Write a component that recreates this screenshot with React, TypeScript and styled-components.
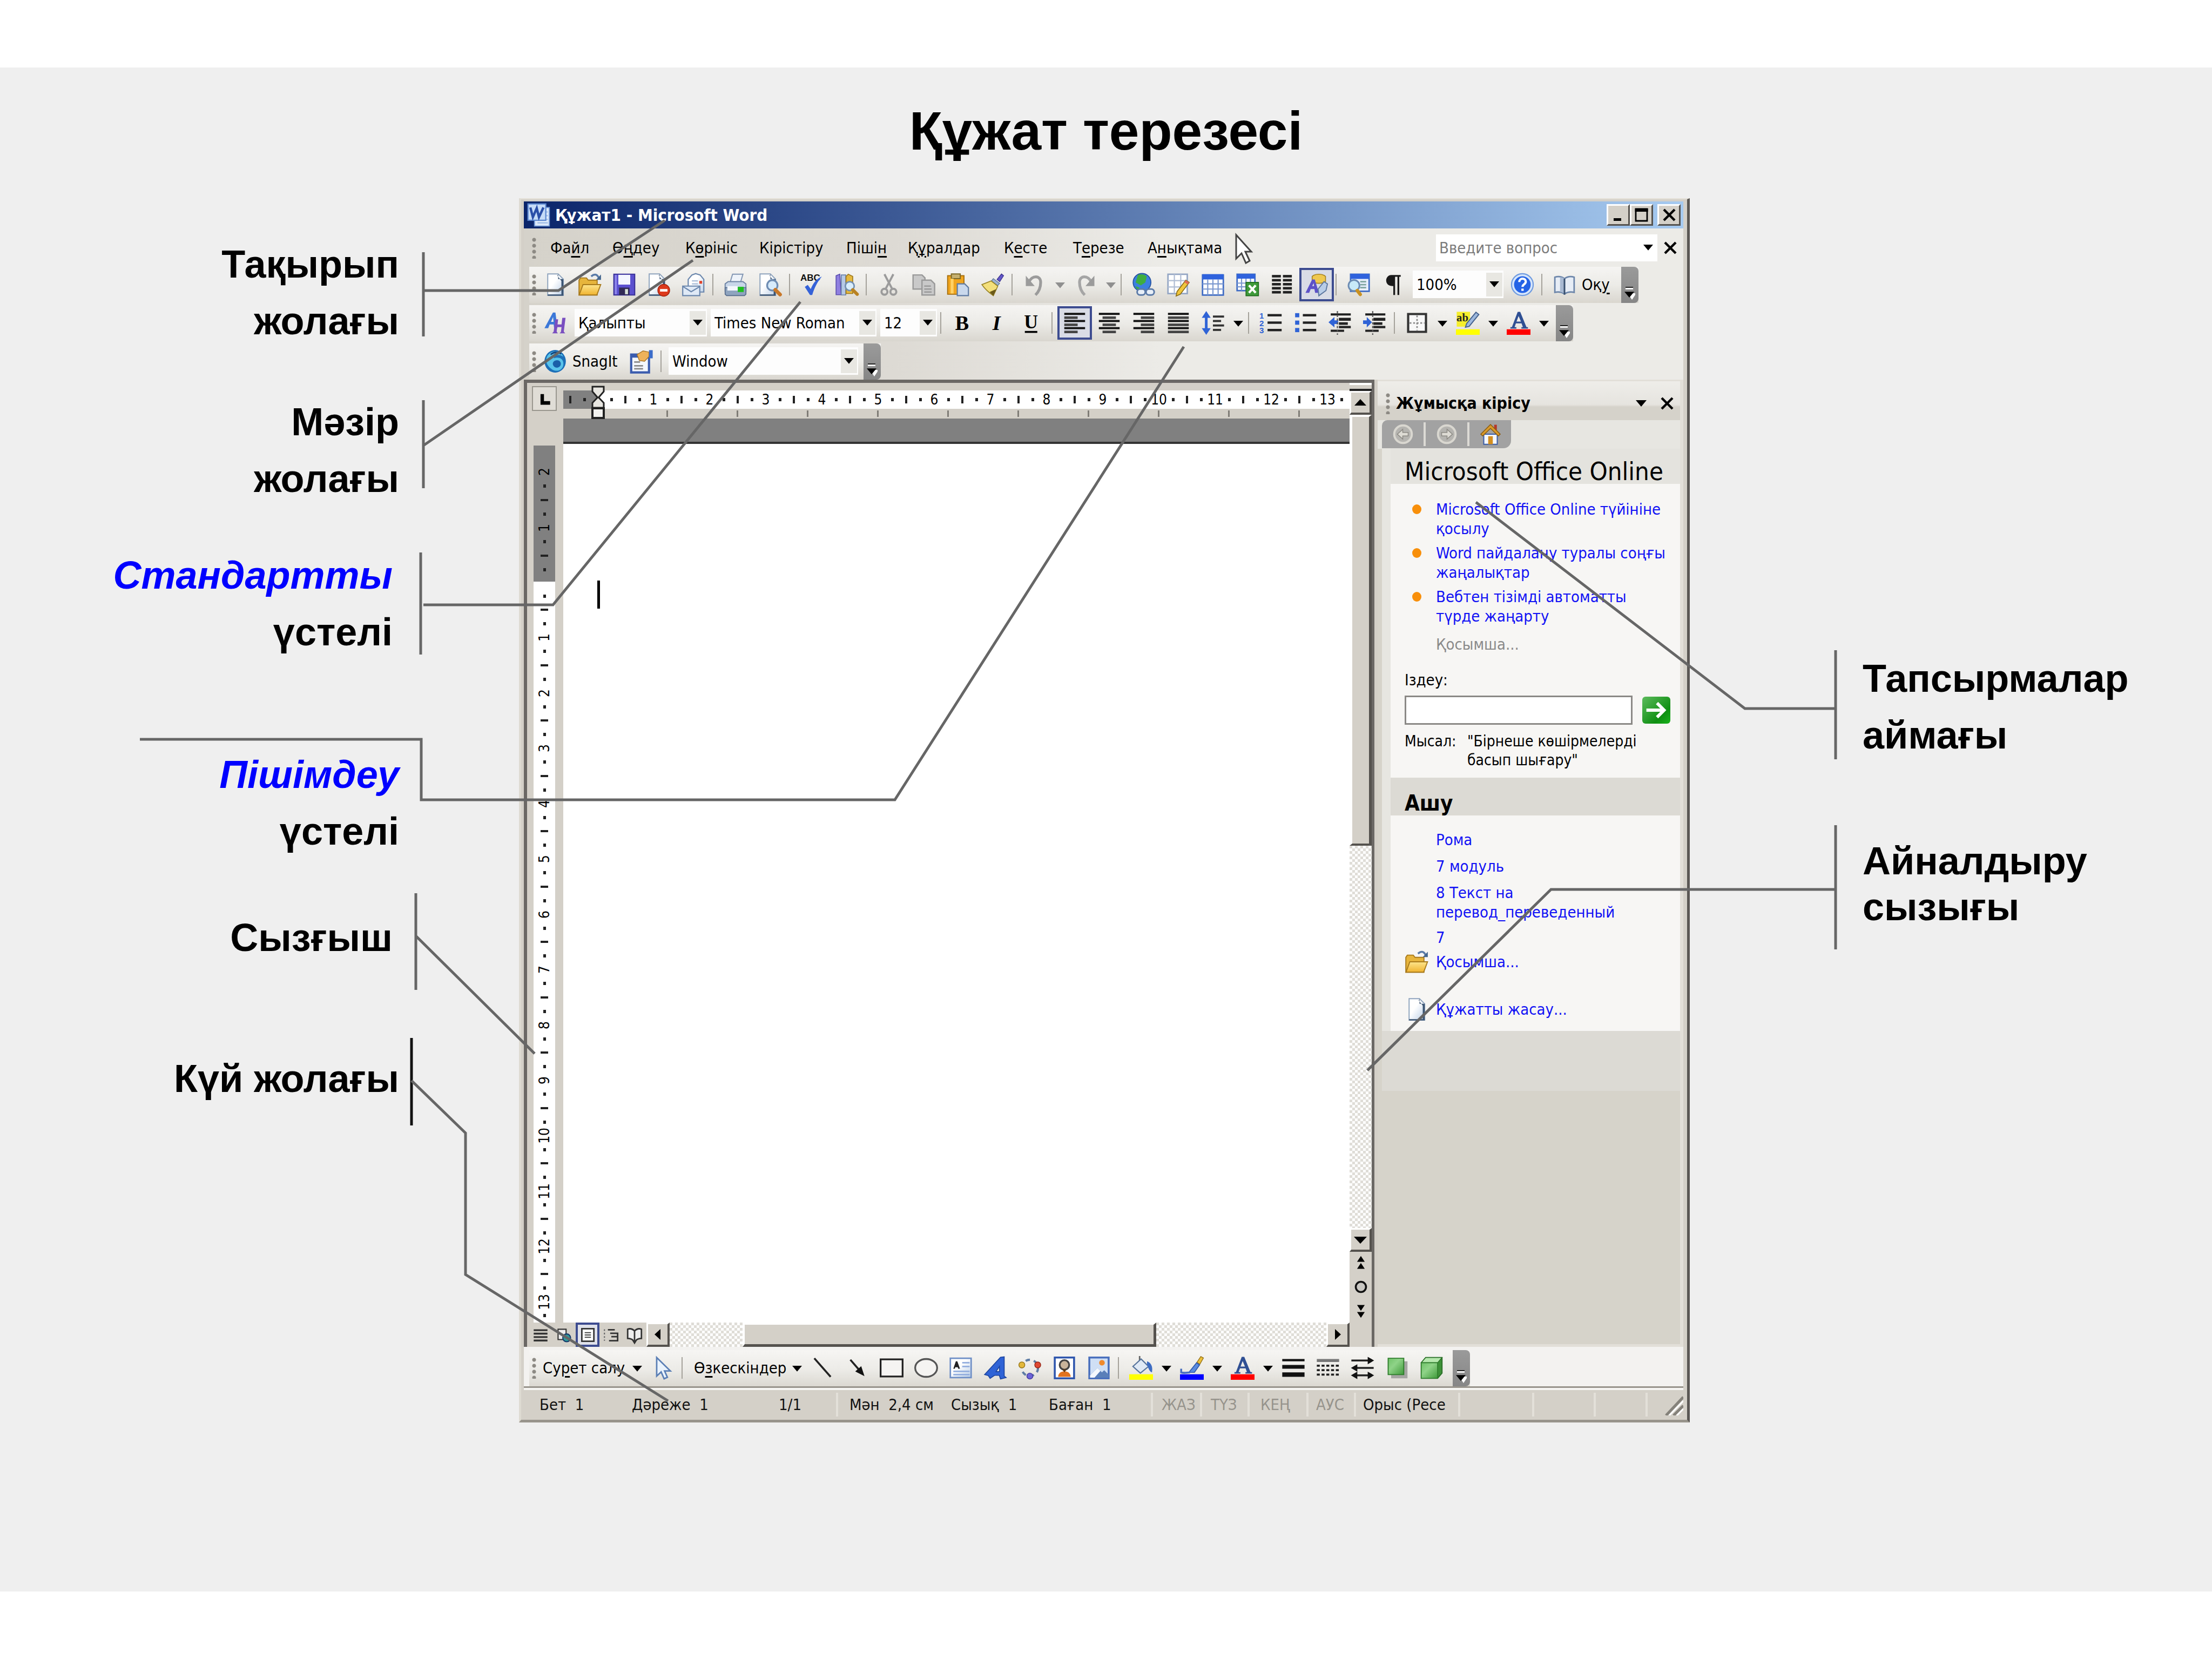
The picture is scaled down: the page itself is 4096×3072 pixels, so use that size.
import React from 'react';
import styled, { createGlobalStyle, css } from 'styled-components';

const uiFont = '"DejaVu Sans Condensed", "DejaVu Sans", "Noto Sans", sans-serif';
const face = '#d4d0c8';

const GlobalStyle = createGlobalStyle`
  *, *::before, *::after { box-sizing: border-box; }
  body { margin: 0; background: #fff; font-family: "Liberation Sans", Arial, sans-serif; color: #000; }
  button, input, select { font: inherit; color: inherit; }
  h1, h2, h3, ul, p { margin: 0; padding: 0; }
`;

/* ---------- slide ---------- */
const Page = styled.div`
  position: relative;
  min-height: 100vh;
  padding: 125px 0;
  display: flex;
  flex-direction: column;
`;
const Slide = styled.main`
  flex: 1;
  background: #efefef;
`;
const SlideHeader = styled.header`
  height: 242px;
  padding-bottom: 8px;
  display: grid;
  place-items: center;
`;
const SlideTitle = styled.h1`
  font-size: 100px;
  line-height: 120px;
  font-weight: bold;
`;
const Columns = styled.div`
  display: grid;
  grid-template-columns: minmax(0, 961fr) minmax(0, 2168fr) minmax(0, 967fr);
  align-items: start;
`;
const Notes = styled.div<{ $side: 'left' | 'right' }>`
  display: flex;
  flex-direction: column;
  text-align: ${p => (p.$side === 'left' ? 'right' : 'left')};
`;
const Note = styled.p<{ $before: number; $inset: number; $tight?: boolean }>`
  font-size: 72px;
  font-weight: bold;
  line-height: ${p => (p.$tight ? 85 : 105)}px;
  margin-top: ${p => p.$before}px;
  padding: ${p => (p.$inset > 300 ? `0 0 0 ${p.$inset}px` : `0 ${p.$inset}px 0 0`)};
  white-space: nowrap;
`;
const Term = styled.em`
  color: #00f;
`;
const Leaders = styled.svg`
  position: absolute;
  inset: 0;
  width: 100%;
  height: 100%;
  pointer-events: none;
`;

/* ---------- window ---------- */
const Window = styled.section`
  background: ${face};
  border: solid;
  border-width: 2px 5px 5px 4px;
  border-color: #e4e1d8 #5b5855 #98948c #dedbd2;
  padding: 4px 7px 3px 5px;
  font-family: ${uiFont};
  font-size: 29px;
  line-height: 36px;
  position: relative;
`;
const TitleBar = styled.div`
  height: 50px;
  display: flex;
  align-items: center;
  padding: 0 5px 0 6px;
  background: linear-gradient(90deg, #0a246a, #a6caf0);
  color: #fff;
`;
const TitleText = styled.h2`
  flex: 1;
  font-size: 31px;
  line-height: 40px;
  padding-left: 8px;
  font-weight: bold;
`;
const raised = css`
  background: ${face};
  border: 3px solid;
  border-color: #fff #55524e #55524e #fff;
`;
const CaptionButton = styled.button<{ $gap?: boolean }>`
  ${raised}
  width: 43px;
  height: 40px;
  padding: 0;
  margin-left: ${p => (p.$gap ? 8 : 0)}px;
  display: grid;
  place-items: center;
`;
const Chrome = styled.div`
  background: linear-gradient(90deg, #d5d2ca 0, #dddad4 32%, #ecebe7 55%);
`;
const MenuBar = styled.nav`
  height: 71px;
  display: flex;
  align-items: center;
  padding-left: 10px;
`;
const MenuItem = styled.button<{ $w: number }>`
  width: ${p => p.$w}px;
  padding: 0;
  border: 0;
  background: none;
  text-align: left;
  white-space: nowrap;
  u { text-underline-offset: 5px; text-decoration-thickness: 3px; }
`;
const Handle = styled.span<{ $w?: number }>`
  width: ${p => p.$w ?? 16}px;
  height: 40px;
  flex: none;
  background: radial-gradient(circle at 9px 5px, #8d8a84 3px, transparent 4px) 0 0 / 16px 11px repeat-y;
`;
const AskBox = styled.label`
  margin-left: auto;
  width: 410px;
  height: 50px;
  display: grid;
  align-items: center;
  background: #fff;
  > * { grid-area: 1 / 1; }
`;
const AskInput = styled.input`
  width: 100%;
  border: 0;
  padding: 0 6px;
  background: none;
  &::placeholder { color: #7c7c7c; opacity: 1; }
`;
const FlatButton = styled.button`
  width: 48px;
  height: 44px;
  border: 0;
  padding: 0;
  background: none;
  display: grid;
  place-items: center;
`;
const Toolbar = styled.div<{ $last?: boolean }>`
  width: max-content;
  height: 67px;
  margin: 0 0 ${p => (p.$last ? 0 : 4)}px 10px;
  padding-bottom: 2px;
  display: flex;
  align-items: center;
  background: linear-gradient(180deg, #f5f4f2 0, #ecebe7 50%, #d9d6cf 100%);
`;
const IconButton = styled.button<{ $on?: boolean }>`
  width: 64px;
  height: 62px;
  flex: none;
  padding: 0;
  display: grid;
  place-items: center;
  border: 4px solid ${p => (p.$on ? '#3d4c90' : 'transparent')};
  background: ${p => (p.$on ? '#d9dce6' : 'none')};
`;
const DropButton = styled.button`
  width: 30px;
  height: 62px;
  flex: none;
  padding: 4px 0 0;
  border: 0;
  background: none;
  display: grid;
  place-items: center;
`;
const WordButton = styled.button<{ $w: number; $indent?: boolean }>`
  width: ${p => p.$w}px;
  border: 0;
  padding: 0 0 0 ${p => (p.$indent ? 12 : 0)}px;
  background: none;
  display: flex;
  align-items: center;
  white-space: nowrap;
  u { text-underline-offset: 5px; text-decoration-thickness: 3px; }
`;
const Divider = styled.span`
  width: 14px;
  height: 40px;
  flex: none;
  border-right: 9px solid transparent;
  background: linear-gradient(90deg, transparent 3px, #a5a29b 3px) padding-box;
`;
const ComboBox = styled.label<{ $w: number }>`
  width: ${p => p.$w}px;
  height: 51px;
  margin: 0 3px 0 4px;
  display: grid;
  align-items: center;
  background: #fdfdfd;
  > * { grid-area: 1 / 1; }
`;
const ComboSelect = styled.select`
  appearance: none;
  width: 100%;
  height: 46px;
  border: 0;
  padding: 0 7px;
  background: none;
`;
const ComboArrow = styled.span<{ $plain?: boolean }>`
  justify-self: end;
  width: 30px;
  height: 44px;
  margin-right: 2px;
  display: grid;
  place-items: center;
  background: ${p => (p.$plain ? 'none' : '#e8e7e2')};
  pointer-events: none;
`;
const EndCap = styled.button`
  width: 32px;
  height: 67px;
  margin-left: 7px;
  padding: 0 0 6px;
  align-self: flex-start;
  border: 0;
  border-radius: 0 8px 8px 0;
  background: linear-gradient(180deg, #9a9a9a, #868686);
  display: flex;
  align-items: flex-end;
  justify-content: center;
`;

/* ---------- document ---------- */
const Workspace = styled.div`
  display: flex;
  gap: 6px;
  min-height: 1791px;
`;
const DocFrame = styled.div`
  flex: 1;
  min-width: 0;
  border: solid #6b6865;
  border-width: 6px 5px 0 6px;
  display: grid;
  grid-template-columns: 67px minmax(0, 1fr) 41px;
  grid-template-rows: 66px minmax(0, 1fr) 45px;
`;
const Corner = styled.div`
  padding: 6px 0 0 9px;
`;
const TabButton = styled.button`
  width: 46px;
  height: 46px;
  padding: 0;
  border: 2px solid #9a978f;
  background: #e0ddd6;
  display: grid;
  place-items: center;
`;
const HRuler = styled.div`
  padding-top: 14px;
  position: relative;
`;
const HStrip = styled.div`
  display: flex;
  height: 34px;
`;
const HPart = styled.div<{ $margin?: boolean }>`
  display: flex;
  align-items: center;
  overflow: hidden;
  background: ${p => (p.$margin ? '#808080' : '#fff')};
  ${p => (p.$margin ? 'width: 64px;' : 'flex: 1; padding-left: 12px;')}
`;
const HTick = styled.span`
  width: 26px;
  flex: none;
  display: flex;
  justify-content: center;
  font-size: 26px;
  line-height: 34px;
`;
const Dot = styled.i`
  width: 5px;
  height: 6px;
  background: #222;
`;
const Bar = styled.i<{ $v?: boolean }>`
  width: ${p => (p.$v ? 14 : 4)}px;
  height: ${p => (p.$v ? 4 : 14)}px;
  background: #222;
`;
const TabStops = styled.div`
  display: flex;
  overflow: hidden;
  height: 12px;
  margin-top: 3px;
  padding-left: 64px;
`;
const TabStop = styled.span`
  width: 130px;
  flex: none;
  border-right: 3px solid #807d77;
`;
const IndentMarker = styled.svg`
  position: absolute;
  left: 52px;
  top: 5px;
  width: 25px;
  height: 62px;
`;
const VRuler = styled.div`
  padding: 50px 15px 0 12px;
  display: flex;
  flex-direction: column;
`;
const VPart = styled.div<{ $margin?: boolean }>`
  display: flex;
  flex-direction: column;
  background: ${p => (p.$margin ? '#808080' : '#fff')};
  ${p => (p.$margin ? 'height: 252px; padding: 36px 0 9px;' : 'flex: 1; padding-top: 14px;')}
`;
const VTick = styled.span`
  flex: 1 1 0;
  min-height: 0;
  display: flex;
  align-items: center;
  justify-content: center;
`;
const VNumber = styled.span`
  writing-mode: vertical-rl;
  transform: rotate(180deg);
  font-size: 26px;
  line-height: 34px;
`;
const Paper = styled.div`
  background: #fff;
  border-top: 43px solid #808080;
`;
const PaperEdge = styled.div`
  height: 257px;
  border-top: 4px solid #333;
`;
const Caret = styled.div`
  width: 5px;
  height: 52px;
  margin-left: 63px;
  background: #000;
`;
const dither = css`
  background: repeating-conic-gradient(#fdfdfd 0 25%, #dfddd7 0 50%) 0 0 / 10px 10px;
`;
const VScroll = styled.div`
  grid-column: 3;
  grid-row: 1 / 4;
  display: flex;
  flex-direction: column;
`;
const SplitBox = styled.div`
  height: 15px;
  border: solid;
  border-width: 4px 0 4px;
  border-color: #fff #333 #222;
`;
const ScrollButton = styled.button<{ $w?: number }>`
  ${raised}
  border-width: 3px 4px 4px 3px;
  width: ${p => (p.$w ? p.$w + 'px' : 'auto')};
  height: ${p => (p.$w ? 'auto' : '44px')};
  flex: none;
  padding: 0;
  display: grid;
  place-items: center;
`;
const VThumb = styled.div`
  ${raised}
  border-width: 4px 5px 4px 5px;
  height: 798px;
`;
const Track = styled.div<{ $w?: number }>`
  ${dither}
  ${p => (p.$w ? `width: ${p.$w}px;` : 'flex: 1;')}
`;
const BrowseButtons = styled.div`
  height: 176px;
  display: flex;
  flex-direction: column;
`;
const BrowseButton = styled.button`
  height: 43px;
  border: 0;
  padding: 0;
  background: none;
  display: grid;
  place-items: center;
`;
const HBar = styled.div`
  grid-column: 1 / 3;
  display: flex;
`;
const Views = styled.div`
  width: 221px;
  padding-left: 3px;
  display: flex;
`;
const ViewButton = styled.button<{ $on?: boolean }>`
  flex: 1;
  padding: 0;
  display: grid;
  place-items: center;
  border: 4px solid ${p => (p.$on ? '#3d4c90' : 'transparent')};
  background: ${p => (p.$on ? '#dfe1ea' : 'none')};
`;
const HThumb = styled.div`
  ${raised}
  border-width: 4px 5px 5px 4px;
  width: 766px;
`;

/* ---------- task pane ---------- */
const TaskPane = styled.aside`
  width: 566px;
  flex: none;
  padding: 3px 6px 5px 0;
  background: #e2dfd8;
  display: flex;
  flex-direction: column;
`;
const PaneHeader = styled.div`
  height: 72px;
  display: flex;
  align-items: center;
  padding: 10px 0 0 10px;
  background: linear-gradient(180deg, #eeede9 0, #e6e4df 60%, #d5d2ca 66%);
`;
const PaneTitle = styled.h2`
  flex: 1;
  padding-left: 8px;
  font-size: 30px;
  line-height: 36px;
`;
const PaneNav = styled.div`
  height: 53px;
  padding-left: 8px;
  background: #e7e6e1;
`;
const NavStrip = styled.div`
  width: 239px;
  height: 52px;
  display: flex;
  align-items: center;
  background: #a2a2a2;
  border-radius: 10px 0 14px 0;
`;
const NavButton = styled.button`
  flex: 1;
  height: 44px;
  padding: 0;
  border: 0;
  background: none;
  display: grid;
  place-items: center;
  & + & { border-left: 4px solid #dcdad5; }
`;
const PaneBody = styled.div`
  flex: 1;
  padding-left: 8px;
  background: #d6d3ca;
  display: flex;
  flex-direction: column;
`;
const SectionTitle = styled.h3<{ $tint?: boolean }>`
  height: ${p => (p.$tint ? 70 : 65)}px;
  display: flex;
  align-items: center;
  padding: ${p => (p.$tint ? 24 : 18)}px 0 0 26px;
  border-left: 16px solid #e7e6e1;
  background: ${p => (p.$tint ? '#dcdad4' : '#e4e3de')};
  font-size: ${p => (p.$tint ? 40 : 47)}px;
  line-height: 46px;
  font-weight: ${p => (p.$tint ? 'bold' : 'normal')};
  white-space: nowrap;
`;
const Section = styled.div`
  border-left: 16px solid #e7e6e1;
  background: #f7f6f4;
`;
const OnlineSection = styled(Section)`
  height: 544px;
  padding: 29px 0 0 26px;
`;
const OpenSection = styled(Section)`
  height: 399px;
  padding: 27px 0 0 26px;
`;
const LinkList = styled.ul`
  list-style: none;
`;
const LinkRow = styled.li<{ $after: number; $icon?: boolean }>`
  display: grid;
  grid-template-columns: 58px minmax(0, 1fr);
  align-items: ${p => (p.$icon ? 'center' : 'start')};
  margin-bottom: ${p => p.$after}px;
  line-height: 36px;
`;
const Bullet = styled.i`
  width: 17px;
  height: 18px;
  margin: 9px 0 0 14px;
  border-radius: 50%;
  background: #f88f0a;
`;
const PaneLink = styled.a<{ $muted?: boolean }>`
  grid-column: 2;
  color: ${p => (p.$muted ? '#8a8a8a' : '#1212f5')};
  text-decoration: none;
  white-space: nowrap;
`;
const SearchLabel = styled.label`
  display: block;
  margin-top: 30px;
  line-height: 36px;
`;
const SearchRow = styled.div`
  display: flex;
  align-items: center;
  gap: 18px;
  margin: 11px 0 13px;
`;
const SearchInput = styled.input`
  width: 422px;
  height: 54px;
  border: 3px solid #8b8986;
  background: #fff;
`;
const GoButton = styled.button`
  width: 52px;
  height: 50px;
  padding: 0;
  border: 0;
  border-radius: 6px;
  background: linear-gradient(135deg, #5dbb5d, #0f8f12 70%, #19b41c);
  display: grid;
  place-items: center;
`;
const Example = styled.p`
  display: grid;
  grid-template-columns: 116px minmax(0, 1fr);
  font-size: 28px;
  line-height: 35px;
  white-space: nowrap;
`;
const PaneFiller = styled.div`
  height: 111px;
  background: #dcdad4;
`;

/* ---------- bottom ---------- */
const DrawDock = styled.div`
  padding-top: 6px;
  background: #f3f2f0;
  ${Toolbar} { background: linear-gradient(180deg, #f6f5f3 0, #ecebe7 55%, #dbd8d1 100%); }
`;
const StatusBar = styled.footer`
  height: 59px;
  display: flex;
  align-items: center;
  border-top: 3px solid #98948c;
  box-shadow: inset 0 4px 0 #f6f5f2;
  padding: 6px 0 0 29px;
`;
const StatusItem = styled.span<{ $w: number; $muted?: boolean }>`
  width: ${p => p.$w}px;
  flex: none;
  white-space: pre;
  color: ${p => (p.$muted ? '#96938c' : '#111')};
`;
const StatusRule = styled.span<{ $after: number }>`
  width: ${p => p.$after}px;
  height: 44px;
  flex: none;
  border-left: 4px solid #e3e0d9;
`;
const Grip = styled.svg`
  margin-left: auto;
  width: 34px;
  height: 40px;
`;
const Pointer = styled.svg`
  position: absolute;
  left: 1320px;
  top: 62px;
  width: 36px;
  height: 60px;
`;

/* ---------- icons ---------- */
const IconSvg = styled.svg`
  overflow: visible;
`;
const Down = ({ c = '#000', w = 18 }: { c?: string; w?: number }) => (
  <svg width={w} height={w * 0.6} viewBox="0 0 10 6" aria-hidden="true"><path d="M0 0h10L5 6z" fill={c} /></svg>
);
const Cross = () => (
  <svg width="26" height="24" viewBox="0 0 13 12" aria-hidden="true"><path d="M1.5 1l10 10M11.5 1l-10 10" stroke="#000" strokeWidth="2.2" /></svg>
);
const CapMark = () => (
  <svg width="20" height="24" viewBox="0 0 10 12" aria-hidden="true"><path d="M3 6h8L7 12z" fill="#fff" /><path d="M1 1h7v1.4H1z" fill="#fff" /><path d="M1 0h7v1H1z" fill="#222" /><path d="M0 4.600h9L4.500 10z" fill="#000" /></svg>
);
const Lines = ({ rows }: { rows: [number, number][] }) => (
  <>{rows.map(([x, w], i) => <rect key={i} x={x} y={1.2 + i * 2.4} width={w} height={i % 2 ? 1.7 : 1.4} fill={i % 2 ? '#444' : '#111'} />)}</>
);
const page = <><path d="M3 .8h7l3.500 3.500v11H3z" fill="url(#gPage)" stroke="#8ea3bd" strokeWidth=".7" /><path d="M10 .8v3.500h3.500v11h-1.300V5.500L9.500 2z" fill="#3d5674" /><path d="M3 14.600h10.500v.9H3z" fill="#3d5674" /></>;
const letterA = <path d="M7.400 .5h1.700l4.200 10.300h1v1H9.900v-1h1L10 8.300H6.200l-.9 2.500h1.200v1H2.500v-1h1zM8 3.400L6.600 7.100h3z" fill="#2f4f93" />;

const icons: Record<string, React.ReactNode> = {
  newDoc: page,
  open: <><path d="M.8 5l1-1.500h4L7 5h6v10H.8z" fill="#e7b53c" stroke="#a87a1c" strokeWidth=".7" /><path d="M3.500 8H15.400l-2.600 7H.9z" fill="url(#gFolder)" stroke="#a87a1c" strokeWidth=".7" /><path d="M9 2.500c2-2 4-1.500 5 .8" fill="none" stroke="#5a7ba8" strokeWidth="1.300" /><path d="M15.600 1.200v3.600h-3.400z" fill="#45678f" /></>,
  save: <><path d="M1 1h14v14H1z" fill="#5b50cf" stroke="#3a3199" strokeWidth=".8" /><path d="M4 1.400h8v6.600H4z" fill="#f4f6ff" /><path d="M4.500 10h7v5h-7z" fill="#312a55" /><path d="M8.500 11h2v3.500h-2z" fill="#d8e2d8" /><path d="M1.500 1.500h1.500v13H1.500z" fill="#8c84ea" /></>,
  permission: <><g transform="translate(-1.500 0)">{page}</g><circle cx="11.300" cy="11.800" r="4" fill="#dd3a1c" stroke="#a62410" strokeWidth=".5" /><path d="M8.800 11h5v1.700h-5z" fill="#fff" /></>,
  mail: <><path d="M4.500 15V4.500L7 1.500 9.500 .6l3 .9 2.500 3V13H12z" fill="url(#gPage)" stroke="#6b87ad" strokeWidth=".8" /><path d="M7 5.500h4M7 7.500h4" stroke="#a9bcd8" strokeWidth=".8" /><path d="M.8 9h11.500v6.400H.8z" fill="#dfe9f6" stroke="#6b87ad" strokeWidth=".8" /><path d="M1 9.300l5.500 3.500 5.800-3.500" fill="none" stroke="#6b87ad" strokeWidth=".8" /><path d="M12 5.500h1.900v1.900H12z" fill="#e0442c" /></>,
  print: <><path d="M6 1h7l-1.800 6H4.200z" fill="#eef3fa" stroke="#8195b2" strokeWidth=".7" /><path d="M1 7.500l2-1.500h10l2 1.500v5H1z" fill="#c8d6e8" stroke="#6d83a4" strokeWidth=".7" /><path d="M1 10h14v4.500l-1 .9H2l-1-.9z" fill="#8fa4bf" stroke="#566c8c" strokeWidth=".6" /><path d="M2.500 9h7v3h-7z" fill="#f2f6fb" /><path d="M9.500 9.500h4v3.500h-4z" fill="#1fbf1f" /></>,
  preview: <><g transform="translate(-1.800 0)">{page}</g><circle cx="9.500" cy="8.500" r="3.500" fill="#d7ebfb" stroke="#6f8db3" strokeWidth="1.200" /><path d="M11.500 11.500l3.200 3.200" stroke="#c8782a" strokeWidth="2.500" strokeLinecap="round" /></>,
  spelling: <><text x="0" y="5.600" fontSize="6.200" fontWeight="bold" fontFamily="Liberation Sans, sans-serif" fill="#111">ABC</text><path d="M3 9.500l2-1.300 2 2.800c1.500-4 4-7 7.500-8.500C11.500 6 9.500 10 8 15H6.500z" fill="#3562d8" /></>,
  research: <><path d="M.8 2l2.500-1 .9 13.800H.8z" fill="#8f7fe0" stroke="#5c4fae" strokeWidth=".6" /><path d="M4.300 1.500h3v13.500h-3z" fill="#b6c9e6" stroke="#6b83ab" strokeWidth=".6" /><path d="M7.500 2.500L9 1l3 1.500V14H7.500z" fill="#e6b93e" stroke="#9c7820" strokeWidth=".6" /><circle cx="10" cy="9" r="3" fill="#d9edfb" stroke="#7390b2" /><path d="M12 11.500l3 3" stroke="#b98222" strokeWidth="2.200" strokeLinecap="round" /></>,
  cut: <g fill="none" stroke="#9b9b9b" strokeWidth="1.400"><path d="M5 1l5 9.500M11 1L6 10.500" /><circle cx="5" cy="12.800" r="2" /><circle cx="11" cy="12.800" r="2" /></g>,
  copy: <g fill="#c9c9c9" stroke="#9a9a9a" strokeWidth=".9"><path d="M1 1.500h6l2 2V11H1z" /><path d="M7 5h6l2.500 2.500V15H7z" /><path d="M8.500 9h4.500M8.500 11h5M8.500 13h5" /></g>,
  paste: <><path d="M1 2h11v12.500H1z" fill="#f0a51e" stroke="#a86f0c" strokeWidth=".7" /><path d="M3.500 .8h6v3.200h-6z" fill="#c5b070" stroke="#7b6726" strokeWidth=".7" /><path d="M3 4h2v10H3z" fill="#ffd166" /><path d="M7.500 7.500h5l2.500 2.500v5.400H7.500z" fill="#c9d8ec" stroke="#5f7ba3" strokeWidth=".8" /></>,
  painter: <><path d="M11 4.500L14 .8l1.400 1.200L12.800 6z" fill="#6357c9" stroke="#3d348f" strokeWidth=".5" /><path d="M8.500 4l4.200 3.200-1.300 1.500L7.200 5.600z" fill="#9db3cf" stroke="#5f7899" strokeWidth=".5" /><path d="M7 5.500l4.500 3.500-3 6.500C5 13 2.500 10.500.8 8z" fill="#f3df7a" stroke="#9a8426" strokeWidth=".6" /><path d="M6 13l2.500 2.500L10.500 11z" fill="#6b5a1a" /></>,
  undo: <><path d="M4 6.500C6 1.500 12 1.500 12 6.500c0 3-1 6-3.500 8.500" fill="none" stroke="#9b9b9b" strokeWidth="1.900" /><path d="M2 2v7h6z" fill="#9b9b9b" /></>,
  redo: <><path d="M12 6.500C10 1.500 4 1.500 4 6.500c0 3 1 6 3.500 8.500" fill="none" stroke="#a5a5a5" strokeWidth="1.900" /><path d="M14 2v7H8z" fill="#9b9b9b" /></>,
  globe: <><circle cx="6.800" cy="6.500" r="6" fill="#3c7fe0" stroke="#24519e" strokeWidth=".6" /><path d="M4 1.500c3-1 5 0 6 1l-1 4-3 2-3.500-2z" fill="#3fae3f" /><path d="M2 9l3 1 1 2.400-2-.8z" fill="#3fae3f" /><rect x="3.500" y="11" width="5.500" height="4" rx="2" fill="#e8eff8" stroke="#5c7ba8" strokeWidth="1.100" /><rect x="9.500" y="11" width="5.500" height="4" rx="2" fill="#e8eff8" stroke="#5c7ba8" strokeWidth="1.100" /></>,
  tableDraw: <><path d="M1 1h13v13H1z" fill="#fff" stroke="#94a6c4" /><path d="M5.300 1v13M9.600 1v13M1 5.300h13M1 9.600h13" stroke="#b0bdd4" strokeWidth=".8" /><path d="M13 5l2.300 1.500-6 8-2.800 1.200.6-3z" fill="#f0c63c" stroke="#8b6d14" strokeWidth=".6" /><path d="M13 5l2.300 1.500-1 1.400L12 6.400z" fill="#df6a55" /></>,
  table: <><path d="M1 1.500h14v13.500H1z" fill="#fff" stroke="#3f6cc4" /><path d="M1 1h14v3.500H1z" fill="#2f62dd" /><path d="M4.500 4.500V15M8 4.500V15M11.500 4.500V15M1 7.500h14M1 11h14" stroke="#7b98cf" strokeWidth=".8" /></>,
  excel: <><path d="M1 1h12v11H1z" fill="#fff" stroke="#3f6cc4" /><path d="M1 1h12v3H1z" fill="#2f62dd" /><path d="M4 4v8M7 4v8M10 4v8M1 7h12M1 9.500h12" stroke="#7b98cf" strokeWidth=".8" /><path d="M7 6.500h8.400v9H7z" fill="#3f9a3a" stroke="#1e6b1c" strokeWidth=".6" /><path d="M9 8.500l4.500 5M13.500 8.500l-4.500 5" stroke="#fff" strokeWidth="1.500" /></>,
  columns: <>{[1.5, 4.2, 6.9, 9.6, 12.3].map(y => <g key={y} fill="#222"><rect x="1.200" y={y} width="6" height="1.700" /><rect x="8.600" y={y} width="6" height="1.700" /></g>)}</>,
  drawing: <><path d="M5 2.500c2-2 7-2 9 0v3.500c-2 1.500-7 1.500-9 0z" fill="#efc84f" stroke="#a78422" strokeWidth=".6" /><path d="M.5 13.500L5 4.500h1.800L9.500 13.500H7L6.500 11H4L3 13.500zM5 9h1.300L6 7z" fill="#5d52c8" /><path d="M9 11l4-5 2.300 1.500-1 4.500-4.800 3.500z" fill="#b9cde8" stroke="#5c779f" strokeWidth=".7" /></>,
  docMap: <><path d="M2.500 1h12.500v11.500H2.500z" fill="#e8effc" stroke="#3f6cc4" /><path d="M2.500 .8h12.500v3.400H2.500z" fill="#2f62dd" /><path d="M9 6h4M9 8h4M9 10h4" stroke="#7fa6a0" /><circle cx="4.800" cy="8.600" r="3.700" fill="#c8e9f8" stroke="#6d8cb3" strokeWidth="1.100" /><path d="M7 12l2 2.600" stroke="#c99122" strokeWidth="2.300" strokeLinecap="round" /></>,
  para: <path d="M6.500 1.500H13v1.200h-1V15h-1.200V2.700H9.200V15H8V9C4.500 9 3.200 7.300 3.200 5.200S4.800 1.500 6.500 1.500z" fill="#1a1a1a" />,
  help: <><circle cx="8" cy="8" r="7.300" fill="#d7e6fb" stroke="#6f9be0" strokeWidth=".8" /><circle cx="8" cy="8" r="5.600" fill="#2463e6" /><path d="M5.900 6.300c0-3 4.400-3 4.400-.3C10.300 7.800 8.100 7.700 8.100 9.500" fill="none" stroke="#fff" strokeWidth="1.500" /><path d="M7.300 10.700h1.600v1.500H7.300z" fill="#fff" /></>,
  book: <><path d="M1.500 3c2.500-.8 4.500-.5 6.500 1 2-1.500 4-1.800 6.500-1v10.200c-2.500-.6-4.500-.3-6.500 1-2-1.300-4-1.600-6.500-1z" fill="#e7edf6" stroke="#6d86aa" /><path d="M8 4v10.200c-1-.8-2-1.200-3-1.300V3c1.200 0 2 .3 3 1z" fill="#a9bad3" /><path d="M8 4v10.800" stroke="#38506f" strokeWidth="1.100" /></>,
  styles: <><path d="M.8 11.500L6.500 1h1.700l1.300 10.500H7.300L7 9H4.300l-1 2.500zM5.200 7.300h1.700L6.600 4z" fill="#3c78d8" /><path d="M6 15l1-1.200L8 5.500h2L9.600 9h2.700l.5-4.500H15l-1.200 9.300 1 1.200H11l.9-1 .4-3.200H9.400l-.4 3 .8 1.200z" fill="#7a4fc0" /></>,
  bold: <text x="7" y="12.600" textAnchor="middle" fontSize="14" fontWeight="bold" fontFamily="Liberation Serif, serif">B</text>,
  italic: <text x="7" y="12.600" textAnchor="middle" fontSize="14" fontWeight="bold" fontStyle="italic" fontFamily="Liberation Serif, serif">I</text>,
  underline: <><text x="7" y="11.800" textAnchor="middle" fontSize="13" fontWeight="bold" fontFamily="Liberation Serif, serif">U</text><path d="M2.800 13.400h8.400v1.300H2.800z" /></>,
  alignLeft: <Lines rows={[[1, 14], [1, 9], [1, 14], [1, 9], [1, 14], [1, 9]]} />,
  alignCenter: <Lines rows={[[1, 14], [3.500, 9], [1, 14], [3.500, 9], [1, 14], [3.500, 9]]} />,
  alignRight: <Lines rows={[[1, 14], [6, 9], [1, 14], [6, 9], [1, 14], [6, 9]]} />,
  justify: <Lines rows={[[1, 14], [1, 14], [1, 14], [1, 14], [1, 14], [1, 14]]} />,
  spacing: <><path d="M3.500 0l3 4.500H4.400v7H6.500L3.500 16l-3-4.500h2.100v-7H.5z" fill="#2f63d6" />{[3, 6, 9, 12].map(y => <rect key={y} x="8" y={y} width={y % 2 ? 7.500 : 5.500} height="1.400" fill="#333" />)}</>,
  numbering: <>{[1, 2, 3].map(n => <g key={n}><text x="0" y={n * 5} fontSize="5.500" fontWeight="bold" fontFamily="Liberation Sans, sans-serif" fill="#2f63d6">{n}</text><rect x="5.500" y={n * 5 - 3} width="9.500" height="1.600" fill="#222" /></g>)}</>,
  bullets: <>{[2, 7, 12].map(y => <g key={y}><rect x=".8" y={y - .6} width="2.800" height="2.800" fill="#2f63d6" /><rect x="6" y={y} width="9" height="1.600" fill="#222" /></g>)}</>,
  outdent: <><path d="M1.500 1.500h13.500v1.500H1.500zM7 4.500h8v2H7zM7 7.500h6v1.800H7zM7 10h8v1.500H7zM1.500 12.500h9v1.500h-9z" fill="#222" /><path d="M0 7.500l4-3.500v2.300h2.500v2.400H4V11z" fill="#2f63d6" /><path d="M6 0v16" stroke="#555" strokeWidth=".8" strokeDasharray="1.500 1" /></>,
  indent: <><path d="M1.500 1.500h13.500v1.500H1.500zM7 4.500h8v2H7zM7 7.500h6v1.800H7zM7 10h8v1.500H7zM1.500 12.500h9v1.500h-9z" fill="#222" /><path d="M6 7.500L2.500 4v2.300H0v2.400h2.500V11z" fill="#2f63d6" /><path d="M6.500 0v16" stroke="#555" strokeWidth=".8" strokeDasharray="1.500 1" /></>,
  border: <><path d="M2 2h12v12H2z" fill="#f8f8f8" stroke="#333" strokeWidth="1.500" /><path d="M8 3v10M3 8h10" stroke="#888" strokeDasharray="1.200 1.200" /></>,
  highlight: <><path d="M.5 .5h9v10h-9z" fill="#f5ee2c" /><text x=".4" y="7" fontSize="7.500" fontWeight="bold" fontFamily="Liberation Serif, serif" fill="#222">ab</text><path d="M13.500 .8l1.900 1.500-6.500 8-2.500.6.800-2.500z" fill="#9db8dd" stroke="#44618d" strokeWidth=".7" /><path d="M0 12.300h16v3.700H0z" fill="#ff0" /></>,
  fontColor: <>{letterA}<path d="M0 12.300h16v3.700H0z" fill="#f00" /></>,
  snag: <><ellipse cx="8" cy="8" rx="7.200" ry="7.600" fill="#1c6fb8" /><path d="M3 4C6 0 12 1 13.500 5 11 3 8 3.500 7 6c4-1.500 7 .5 6.500 4.500C13 14 9 15.500 6 13.500 2 11 1 7 3 4z" fill="#59c3ea" /><path d="M8 7.500c2-.8 4 .4 3.800 2.500-.3 2.200-3 3-4.500 1.500s-1-3.300.7-4z" fill="#1a5fa8" /><path d="M5 3.500C7 1.500 10 1.800 12 3" stroke="#0d3d7a" fill="none" /></>,
  profile: <><path d="M1 3.500h12v12H1z" fill="#f4f7fc" stroke="#3b5cae" strokeWidth="1.500" /><path d="M1 3h12v2.500H1z" fill="#3b5cae" /><path d="M3 8.500h4M3 11h6M3 13h6" stroke="#888" /><path d="M5 3.500l4-2.500 4 .8v3L10 8 6.500 7.500z" fill="#eeb25a" stroke="#a87425" strokeWidth=".5" /><path d="M13 .5h2.500V6H13z" fill="#3b6cc9" /></>,
  select: <path d="M4 1v12.500l3-2.800 2 4.600 2.200-1L9.300 10h3.900z" fill="#eaf3fd" stroke="#5b7fb5" />,
  line: <path d="M2.500 1.500L13.500 14" stroke="#222" strokeWidth="1.300" />,
  arrow: <><path d="M3.500 2.500L10 10" stroke="#222" strokeWidth="1.300" /><path d="M13 13.500L6.800 10.400 10.800 6.800z" fill="#111" /></>,
  rect: <path d="M.6 2.200h14.800v11.600H.6z" fill="#f5f4f2" stroke="#222" strokeWidth="1.200" />,
  ellipse: <ellipse cx="8" cy="8" rx="7.400" ry="6" fill="#f5f4f2" stroke="#555" strokeWidth="1.200" />,
  textbox: <><path d="M1 1.500h14v13H1z" fill="url(#gPage)" stroke="#6f8fc6" /><path d="M3 8.500L4.700 3.500h1L7.500 8.500H6.300L6 7.500H4.300l-.3 1z" fill="#222" /><path d="M9 4.500h5M9 7h5M3 10.300h11M3 12.500h11" stroke="#93aede" /></>,
  wordart: <path d="M.8 12.500L11.500 .8l2.500-.3V13.500l1.300 1-3.800 1-.8-2.500H7.500L4.500 15 3.300 13.200zM8.500 10.500h2.300V7z" fill="#2f63d6" stroke="#1d459f" strokeWidth=".6" />,
  diagram: <><circle cx="8" cy="8" r="5.500" fill="none" stroke="#5f7da5" strokeWidth="1.500" strokeDasharray="3 2.700" /><circle cx="2.600" cy="6" r="2" fill="#e3b83c" stroke="#957518" strokeWidth=".5" /><circle cx="13.300" cy="6" r="2" fill="#df4a35" stroke="#962313" strokeWidth=".5" /><circle cx="8" cy="13.500" r="2" fill="#6d64d8" stroke="#423a9c" strokeWidth=".5" /></>,
  clipart: <><path d="M1.500 1h13v14h-13z" fill="#fff" stroke="#2f56ad" strokeWidth="1.300" /><circle cx="8" cy="6" r="3.200" fill="#c9b49a" stroke="#444" strokeWidth="1.200" /><path d="M3.800 14c0-5 8.400-5 8.400 0z" fill="#e2731f" /><path d="M6.500 9h3L8 11z" fill="#5d3a16" /></>,
  picture: <><path d="M1.500 1h13v14h-13z" fill="#cfdff5" stroke="#4a70bd" strokeWidth="1.300" /><path d="M2 13l5-5 3 3 1.500-1.500 3 3V14.500H2z" fill="#5a7fb9" /><path d="M2 13l5-5 2 2-4 4.500H2z" fill="#f4f8fd" /><circle cx="10" cy="4.500" r="1.900" fill="#f08a2c" /></>,
  bucket: <><path d="M7 0v5" stroke="#666" /><path d="M2.500 7L8 2l5 5-5.500 4.500z" fill="#dfe9f5" stroke="#56739b" strokeWidth=".8" /><path d="M12 3.500c3 1 4 4 3.300 7.500-1.800-.5-2.300-3-3.300-5z" fill="#3d6cc2" /><path d="M0 12.300h16v3.700H0z" fill="#ff0" /></>,
  brush: <><path d="M14 .3l1.800 1-2.400 4.200-2-1.200z" fill="#edc03a" stroke="#967318" strokeWidth=".5" /><path d="M11.200 4.500l2 1.500-3.500 5H6z" fill="#5b8be0" stroke="#2f58a8" strokeWidth=".6" /><path d="M.8 8.500V11c2 .8 4 0 6 0" fill="none" stroke="#4a6fc0" strokeWidth="1.300" /><path d="M0 12.300h16v3.700H0z" fill="#00f" /></>,
  lineStyle: <path d="M.5 2h15v1.500H.5zM.5 6h15v2.500H.5zM.5 11h15v3H.5z" fill="#111" />,
  dashStyle: <><path d="M.5 2h15v2H.5z" fill="#777" /><path d="M.5 6.500h15M.5 9.500h15M.5 12.500h15" stroke="#222" strokeWidth="1.400" strokeDasharray="2 1.200" /></>,
  arrowStyle: <><path d="M.5 3h12M3 8h12.500M3 13h10" stroke="#222" strokeWidth="1.300" /><path d="M15.800 3l-4.300-2.500v5zM.2 8l4.300-2.500v5zM15.800 13l-4.300-2.500v5zM.2 13l4.300-2.500v5z" fill="#111" /></>,
  shadow: <><path d="M4 3.500h11V15H4z" fill="#a5a5a2" /><path d="M2 1.500h10.500v11H2z" fill="url(#gGreen)" stroke="#2f7d2c" strokeWidth=".7" /></>,
  cube: <><path d="M1 4.500L4 1h11v10.500L12 15H1z" fill="#3d9138" stroke="#2b6f28" strokeWidth=".7" /><path d="M1 4.500L4 1h11l-3 3.500z" fill="#b6e8ae" stroke="#2b6f28" strokeWidth=".5" /><path d="M1 4.500h11V15H1z" fill="url(#gGreen)" stroke="#2f7d2c" strokeWidth=".6" /></>,
  word: <><path d="M5 3h10v12.500H5z" fill="#dce9fa" stroke="#6d94d2" strokeWidth=".7" /><path d="M7 6h7M7 8.500h7M7 11h7M7 13.300h7" stroke="#9dbbe6" strokeWidth=".8" /><path d="M.6 .6h12v11H.6z" fill="#c5dbf7" stroke="#5a86cf" strokeWidth=".8" /><path d="M2.200 3l1.700 6.500L6.500 3.500 8 9.500 11 3" fill="none" stroke="#2a4fa8" strokeWidth="1.600" /></>,
  home: <><path d="M3 8h10v7.500H3z" fill="#f5f8fd" stroke="#3a5da8" strokeWidth=".8" /><path d="M10.700 1h2v4h-2z" fill="#b5382a" /><path d="M8 .8L.8 8l1.400 1.300L8 3.700l5.800 5.600L15.200 8z" fill="#d99a2b" stroke="#8a5c10" strokeWidth=".6" /><path d="M6.300 9.500h3.400v6H6.300z" fill="#d48f20" /></>,
  back: <><circle cx="8" cy="8" r="6.500" fill="#b5b4b0" stroke="#d9d7d0" strokeWidth="1.600" /><path d="M3.800 8l4-3.600v2.300h4v2.600h-4v2.300z" fill="#dddbd4" stroke="#8b8983" strokeWidth=".6" /></>,
  forward: <><circle cx="8" cy="8" r="6.500" fill="#b5b4b0" stroke="#d9d7d0" strokeWidth="1.600" /><path d="M12.200 8l-4-3.600v2.300h-4v2.600h4v2.300z" fill="#dddbd4" stroke="#8b8983" strokeWidth=".6" /></>,
  go: <path d="M1 8h12M8.500 3l5 5-5 5" fill="none" stroke="#fff" strokeWidth="2.200" />,
  tabL: <path d="M5 4.500h2.700v5.500h4.800v2.800H5z" fill="#000" />,
  vNormal: <path d="M2 3h12v1.600H2zM2 6h12v1.600H2zM2 9h12v1.600H2zM2 12h12v1.600H2z" fill="#333" />,
  vWeb: <><path d="M3 3h7v9H3z" fill="#eee" stroke="#333" /><circle cx="10.500" cy="10.500" r="3.400" fill="#2e9a9a" stroke="#15396b" /></>,
  vPrint: <><path d="M3 2.500h10.500v11H3z" fill="#fff" stroke="#333" strokeWidth="1.300" /><path d="M5.500 6h5.500M5.500 8h5.500M5.500 10h5.500" stroke="#444" /></>,
  vOutline: <><path d="M2 3v10" stroke="#666" strokeDasharray="1.500 1.500" /><path d="M5 3.500h6M7 6.500h6.500v6.500H6M8 9.500h5" fill="none" stroke="#333" strokeWidth="1.300" /></>,
  vRead: <path d="M2 3c2-.8 4-.5 6 1.500C10 2.500 12 2.200 14 3v8c-2 0-3.500.5-4.500 1.500L8 15l-1.500-2.500C5.500 11.500 4 11 2 11zM8 4.500V14" fill="#eee" stroke="#333" strokeWidth="1.300" />,
  left: <path d="M10.500 3v10L5 8z" fill="#000" />,
  right: <path d="M5.500 3v10L11 8z" fill="#000" />,
  up: <path d="M2.500 10.500h11L8 4.500z" fill="#000" />,
  down: <path d="M2 5h12L8 11.500z" fill="#000" />,
  dblUp: <path d="M8 2l3 4.500H5zM8 7.500l3 4.500H5z" fill="#000" />,
  dblDown: <path d="M8 8.500L5 4h6zM8 14L5 9.500h6z" fill="#000" />,
  browse: <circle cx="8" cy="8" r="4" fill="#c9c7c2" stroke="#111" strokeWidth="1.500" />,
};
const Icon = ({ n, s = 44 }: { n: string; s?: number }) => (
  <IconSvg width={s} height={s} viewBox="0 0 16 16" aria-hidden="true">{icons[n]}</IconSvg>
);

/* ---------- pieces ---------- */
const Tool = ({ n, label, on }: { n: string; label: string; on?: boolean }) => (
  <IconButton type="button" aria-label={label} $on={on}><Icon n={n} /></IconButton>
);
const Tools = ({ list }: { list: string[] }) => (
  <>{list.map((n, i) => {
    if (n === '|') return <Divider key={i} />;
    if (n === 'v') return <DropButton key={i} type="button" aria-label="more"><Down /></DropButton>;
    if (n === 'v-') return <DropButton key={i} type="button" aria-label="more"><Down c="#8f8f8f" /></DropButton>;
    const on = n.endsWith('*');
    const name = on ? n.slice(0, -1) : n;
    return <Tool key={i} n={name} label={name} on={on} />;
  })}</>
);
const Combo = ({ w, value, label }: { w: number; value: string; label: string }) => (
  <ComboBox $w={w}>
    <ComboSelect aria-label={label} defaultValue={value}><option>{value}</option></ComboSelect>
    <ComboArrow><Down /></ComboArrow>
  </ComboBox>
);
const Cap = () => <EndCap type="button" aria-label="options"><CapMark /></EndCap>;

const centimetres = (count: number) => {
  const marks: (string | number)[] = [];
  for (let n = 1; n <= count; n++) marks.push('dot', 'bar', 'dot', n);
  marks.push('dot');
  return marks;
};
const mark = (m: string | number, v: boolean) =>
  m === 'dot' ? <Dot /> : m === 'bar' ? <Bar $v={v} /> : v ? <VNumber>{m}</VNumber> : m;
const HMarks = ({ marks }: { marks: (string | number)[] }) => (
  <>{marks.map((m, i) => <HTick key={i}>{mark(m, false)}</HTick>)}</>
);
const VMarks = ({ marks }: { marks: (string | number)[] }) => (
  <>{marks.map((m, i) => <VTick key={i}>{mark(m, true)}</VTick>)}</>
);

const menu: [React.ReactNode, number][] = [
  [<>Фа<u>й</u>л</>, 115], [<>Ө<u>ң</u>деу</>, 135], [<>К<u>ө</u>рініс</>, 137], [<>Кірістіру</>, 161],
  [<>Піші<u>н</u></>, 114], [<>Қ<u>ұ</u>ралдар</>, 178], [<>К<u>е</u>сте</>, 128], [<>Т<u>е</u>резе</>, 138], [<>А<u>н</u>ықтама</>, 160],
];

export default function App() {
  return (
    <Page>
      <GlobalStyle />
      <svg width="0" height="0" style={{ position: 'absolute' }} aria-hidden="true">
        <defs>
          <linearGradient id="gPage" x1="0" y1="0" x2="1" y2="1"><stop offset=".4" stopColor="#fff" /><stop offset="1" stopColor="#b9cde6" /></linearGradient>
          <linearGradient id="gFolder" x1="0" y1="0" x2="0" y2="1"><stop offset="0" stopColor="#fde58c" /><stop offset="1" stopColor="#f0b32f" /></linearGradient>
          <linearGradient id="gGreen" x1="0" y1="0" x2="1" y2="1"><stop offset="0" stopColor="#6fc268" /><stop offset=".4" stopColor="#8fd388" /><stop offset="1" stopColor="#3f9a3a" /></linearGradient>
        </defs>
      </svg>
      <Slide>
        <SlideHeader><SlideTitle>Құжат терезесі</SlideTitle></SlideHeader>
        <Columns>
          <Notes $side="left">
            <Note $before={70} $inset={222}>Тақырып<br />жолағы</Note>
            <Note $before={82} $inset={222}>Мәзір<br />жолағы</Note>
            <Note $before={74} $inset={234}><Term>Стандартты</Term><br />үстелі</Note>
            <Note $before={159} $inset={222}><Term>Пішімдеу</Term><br />үстелі</Note>
            <Note $before={92} $inset={234}>Сызғыш</Note>
            <Note $before={156} $inset={222}>Күй жолағы</Note>
          </Notes>

          <Window>
            <TitleBar>
              <Icon n="word" />
              <TitleText>Құжат1 - Microsoft Word</TitleText>
              <CaptionButton type="button" aria-label="minimize"><svg width="30" height="28" viewBox="0 0 15 14"><path d="M3 10h7v2.500H3z" /></svg></CaptionButton>
              <CaptionButton type="button" aria-label="maximize"><svg width="30" height="28" viewBox="0 0 15 14"><path d="M2 1.500h10.500v11H2z" fill="none" stroke="#000" strokeWidth="1.400" /><path d="M1.300 1h12v3h-12z" /></svg></CaptionButton>
              <CaptionButton type="button" aria-label="close" $gap><Cross /></CaptionButton>
            </TitleBar>

            <Chrome>
              <MenuBar>
                <Handle $w={39} />
                {menu.map(([text, w], i) => <MenuItem key={i} type="button" $w={w}>{text}</MenuItem>)}
                <AskBox>
                  <AskInput aria-label="Введите вопрос" placeholder="Введите вопрос" />
                  <ComboArrow $plain><Down /></ComboArrow>
                </AskBox>
                <FlatButton type="button" aria-label="close document"><Cross /></FlatButton>
              </MenuBar>
              <Toolbar>
                <Handle />
                <Tools list={['newDoc', 'open', 'save', 'permission', 'mail', '|', 'print', 'preview', '|', 'spelling', 'research', '|', 'cut', 'copy', 'paste', 'painter', '|', 'undo', 'v-', 'redo', 'v-', '|', 'globe', 'tableDraw', 'table', 'excel', 'columns', 'drawing*', '|', 'docMap', 'para']} />
                <Combo w={168} value="100%" label="zoom" />
                <Tools list={['help', '|']} />
                <WordButton type="button" $w={130}><IconButton as="span"><Icon n="book" /></IconButton><span>Оқ<u>у</u></span></WordButton>
                <Cap />
              </Toolbar>
              <Toolbar>
                <Handle />
                <Tools list={['styles']} />
                <Combo w={245} value="Қалыпты" label="style" />
                <Combo w={307} value="Times New Roman" label="font" />
                <Combo w={105} value="12" label="size" />
                <Tools list={['|', 'bold', 'italic', 'underline', '|', 'alignLeft*', 'alignCenter', 'alignRight', 'justify', 'spacing', 'v', '|', 'numbering', 'bullets', 'outdent', 'indent', '|', 'border', 'v', 'highlight', 'v', 'fontColor', 'v']} />
                <Cap />
              </Toolbar>
              <Toolbar $last>
                <Handle />
                <WordButton type="button" $w={160}><IconButton as="span"><Icon n="snag" /></IconButton>SnagIt</WordButton>
                <Tools list={['profile', '|']} />
                <Combo w={351} value="Window" label="capture" />
                <Cap />
              </Toolbar>
            </Chrome>

            <Workspace>
              <DocFrame>
                <Corner><TabButton type="button" aria-label="tab"><Icon n="tabL" s={38} /></TabButton></Corner>
                <HRuler>
                  <HStrip>
                    <HPart $margin><HMarks marks={['bar', 'dot']} /></HPart>
                    <HPart><HMarks marks={centimetres(13)} /></HPart>
                  </HStrip>
                  <TabStops>{Array.from({ length: 10 }, (_, i) => <TabStop key={i} />)}</TabStops>
                  <IndentMarker viewBox="0 0 25 62"><path d="M2 2h21v9L13.500 22 23 32v9H2v-9l9.500-10L2 11z" fill="#e8e6e1" stroke="#222" strokeWidth="3" /><path d="M2 42h21v18H2z" fill="#f3f2ef" stroke="#222" strokeWidth="4" /></IndentMarker>
                </HRuler>
                <VScroll>
                  <SplitBox />
                  <ScrollButton type="button" aria-label="up"><Icon n="up" s={32} /></ScrollButton>
                  <VThumb />
                  <Track />
                  <ScrollButton type="button" aria-label="down"><Icon n="down" s={32} /></ScrollButton>
                  <BrowseButtons>
                    <BrowseButton type="button" aria-label="previous"><Icon n="dblUp" s={38} /></BrowseButton>
                    <BrowseButton type="button" aria-label="browse"><Icon n="browse" s={38} /></BrowseButton>
                    <BrowseButton type="button" aria-label="next"><Icon n="dblDown" s={38} /></BrowseButton>
                  </BrowseButtons>
                </VScroll>
                <VRuler>
                  <VPart $margin><VMarks marks={[2, 'dot', 'bar', 'dot', 1, 'dot', 'bar', 'dot']} /></VPart>
                  <VPart><VMarks marks={centimetres(13)} /></VPart>
                </VRuler>
                <Paper><PaperEdge /><Caret /></Paper>
                <HBar>
                  <Views>
                    {['vNormal', 'vWeb', 'vPrint', 'vOutline', 'vRead'].map(v => <ViewButton key={v} type="button" aria-label={v} $on={v === 'vPrint'}><Icon n={v} s={34} /></ViewButton>)}
                  </Views>
                  <ScrollButton type="button" aria-label="left" $w={43}><Icon n="left" s={32} /></ScrollButton>
                  <Track $w={135} />
                  <HThumb />
                  <Track />
                  <ScrollButton type="button" aria-label="right" $w={43}><Icon n="right" s={32} /></ScrollButton>
                </HBar>
              </DocFrame>

              <TaskPane>
                <PaneHeader>
                  <Handle />
                  <PaneTitle>Жұмысқа кірісу</PaneTitle>
                  <FlatButton type="button" aria-label="panes"><Down w={20} /></FlatButton>
                  <FlatButton type="button" aria-label="close pane"><Cross /></FlatButton>
                </PaneHeader>
                <PaneNav>
                  <NavStrip>
                    {['back', 'forward', 'home'].map(n => <NavButton key={n} type="button" aria-label={n}><Icon n={n} s={40} /></NavButton>)}
                  </NavStrip>
                </PaneNav>
                <PaneBody>
                  <SectionTitle>Microsoft Office Online</SectionTitle>
                  <OnlineSection>
                    <LinkList>
                      <LinkRow $after={9}><Bullet /><PaneLink href="#">Microsoft Office Online түйініне<br />қосылу</PaneLink></LinkRow>
                      <LinkRow $after={9}><Bullet /><PaneLink href="#">Word пайдалану туралы соңғы<br />жаңалықтар</PaneLink></LinkRow>
                      <LinkRow $after={16}><Bullet /><PaneLink href="#">Вебтен тізімді автоматты<br />түрде жаңарту</PaneLink></LinkRow>
                      <LinkRow $after={0}><PaneLink href="#" $muted>Қосымша...</PaneLink></LinkRow>
                    </LinkList>
                    <SearchLabel htmlFor="search">Іздеу:</SearchLabel>
                    <SearchRow>
                      <SearchInput id="search" />
                      <GoButton type="button" aria-label="go"><Icon n="go" s={42} /></GoButton>
                    </SearchRow>
                    <Example><span>Мысал:</span><span>"Бірнеше көшірмелерді<br />басып шығару"</span></Example>
                  </OnlineSection>
                  <SectionTitle $tint>Ашу</SectionTitle>
                  <OpenSection>
                    <LinkList>
                      <LinkRow $after={13}><PaneLink href="#">Рома</PaneLink></LinkRow>
                      <LinkRow $after={13}><PaneLink href="#">7 модуль</PaneLink></LinkRow>
                      <LinkRow $after={11}><PaneLink href="#">8 Текст на<br />перевод_переведенный</PaneLink></LinkRow>
                      <LinkRow $after={5}><PaneLink href="#">7</PaneLink></LinkRow>
                      <LinkRow $after={44} $icon><Icon n="open" /><PaneLink href="#">Қосымша...</PaneLink></LinkRow>
                      <LinkRow $after={0} $icon><Icon n="newDoc" /><PaneLink href="#">Құжатты жасау...</PaneLink></LinkRow>
                    </LinkList>
                  </OpenSection>
                  <PaneFiller />
                </PaneBody>
              </TaskPane>
            </Workspace>

            <DrawDock>
              <Toolbar $last>
                <Handle $w={25} />
                <WordButton type="button" $w={160}><span>Су<u>р</u>ет салу</span></WordButton>
                <Tools list={['v', 'select', '|']} />
                <WordButton type="button" $w={188} $indent><span>Ө<u>з</u>кескіндер</span></WordButton>
                <Tools list={['v', 'line', 'arrow', 'rect', 'ellipse', 'textbox', 'wordart', 'diagram', 'clipart', 'picture', '|', 'bucket', 'v', 'brush', 'v', 'fontColor', 'v', 'lineStyle', 'dashStyle', 'arrowStyle', 'shadow', 'cube']} />
                <Cap />
              </Toolbar>
            </DrawDock>
            <StatusBar>
              <StatusItem $w={171}>Бет  1</StatusItem>
              <StatusItem $w={272}>Дәреже  1</StatusItem>
              <StatusItem $w={106}>1/1</StatusItem>
              <StatusRule $after={25} />
              <StatusItem $w={188}>Мән  2,4 см</StatusItem>
              <StatusItem $w={181}>Сызық  1</StatusItem>
              <StatusItem $w={189}>Баған  1</StatusItem>
              <StatusRule $after={20} />
              <StatusItem $w={71} $muted>ЖАЗ</StatusItem>
              <StatusRule $after={20} />
              <StatusItem $w={68} $muted>ТҮЗ</StatusItem>
              <StatusRule $after={24} />
              <StatusItem $w={85} $muted>КЕҢ</StatusItem>
              <StatusRule $after={18} />
              <StatusItem $w={70} $muted>АУС</StatusItem>
              <StatusRule $after={17} />
              <StatusItem $w={176}>Орыс (Ресе</StatusItem>
              <StatusRule $after={137} />
              <StatusRule $after={114} />
              <StatusRule $after={96} />
              <StatusRule $after={10} />
              <Grip viewBox="0 0 34 40"><path d="M2 40L34 6M16 40L34 22" stroke="#85827b" strokeWidth="5" /><path d="M8 40L34 13M22 40l12-12" stroke="#fff" strokeWidth="3" /></Grip>
            </StatusBar>
            <Pointer viewBox="0 0 18 30"><path d="M2 2v22l5-5 4 9 3.500-2-4-8.500H16z" fill="#fff" stroke="#444" strokeWidth="1.500" /></Pointer>
          </Window>

          <Notes $side="right">
            <Note $before={837} $inset={320}>Тапсырмалар<br />аймағы</Note>
            <Note $before={138} $inset={320} $tight>Айналдыру<br />сызығы</Note>
          </Notes>
        </Columns>
      </Slide>
      <Leaders viewBox="0 0 4096 3072" aria-hidden="true" fill="none" stroke="#666" strokeWidth="5">
        <path d="M784 467V623M784 538H1034L1231 408" />
        <path d="M784 741V904M784 825L1283 482" />
        <path d="M779 1023V1212M784 1120H1024L1269 820L1482 559" />
        <path d="M259 1369H780V1481H1657L2192 642" />
        <path d="M770 1654V1833M771 1734L990 1951" />
        <path d="M762 1922V2084" stroke="#111" />
        <path d="M762 2001L862 2098V2360L1237 2594" />
        <path d="M3399 1204V1406M3399 1312H3231L2733 930" />
        <path d="M3399 1528V1758M3399 1647H2872L2532 1982" />
      </Leaders>
    </Page>
  );
}
